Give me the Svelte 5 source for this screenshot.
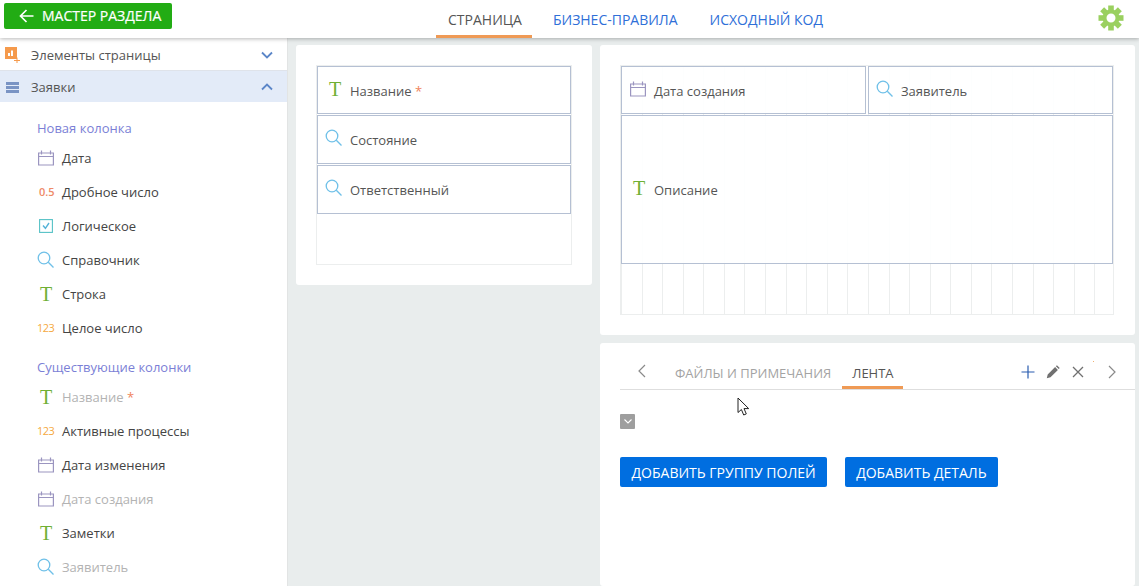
<script>
  const newColumns = [
    { icon: "date", label: "Дата" },
    { icon: "float", label: "Дробное число" },
    { icon: "bool", label: "Логическое" },
    { icon: "lookup", label: "Справочник" },
    { icon: "text", label: "Строка" },
    { icon: "int", label: "Целое число" },
  ];
  const existingColumns = [
    { icon: "text", label: "Название", required: true, used: true },
    { icon: "int", label: "Активные процессы" },
    { icon: "date", label: "Дата изменения" },
    { icon: "date", label: "Дата создания", used: true },
    { icon: "text", label: "Заметки" },
    { icon: "lookup", label: "Заявитель", used: true },
  ];
  const gearTeeth = [0, 45, 90, 135, 180, 225, 270, 315];
</script>

{#snippet fieldIcon(icon)}
  {#if icon === "date"}
    <svg class="ico" width="18" height="16" viewBox="0 0 18 16" fill="none" stroke="#9b95c0" stroke-width="1.2">
      <path d="M1.600 3h14.800v12H1.600zM1.600 6.500h14.800M4.500 0.500v4M13.500 0.500v4" />
    </svg>
  {:else if icon === "lookup"}
    <svg class="ico" width="18" height="18" viewBox="0 0 18 18" fill="none" stroke="#6fc0e8" stroke-width="1.300">
      <circle cx="7" cy="7" r="5.800" />
      <path d="M11.300 11.300l5.200 5.200" />
    </svg>
  {:else if icon === "text"}
    <span class="ico t-icon">T</span>
  {:else if icon === "float"}
    <span class="ico num float">0.5</span>
  {:else if icon === "int"}
    <span class="ico num int">123</span>
  {:else if icon === "bool"}
    <svg class="ico" width="18" height="16" viewBox="0 0 18 16" fill="none">
      <rect x="2.600" y="1.600" width="12.800" height="12.800" stroke="#56c2c6" stroke-width="1.100" />
      <path d="M6 7.500l2.400 2.800L12 5" stroke="#56b4d8" stroke-width="1.400" />
    </svg>
  {/if}
{/snippet}

{#snippet field(icon, label, required, cls)}
  <div class="field {cls}">
    <span class="field-icon">{@render fieldIcon(icon)}</span>
    <span class="field-label">{label}{#if required}<span class="req">&nbsp;*</span>{/if}</span>
  </div>
{/snippet}

<div class="page">
  <header>
    <div class="head-left">
      <button class="back">
        <svg width="15" height="14" viewBox="0 0 15 14" fill="none" stroke="#fff" stroke-width="1.700">
          <path d="M14.500 7H1.500M7.500 1L1.500 7l6 6" />
        </svg>
        МАСТЕР РАЗДЕЛА
      </button>
    </div>
    <nav>
      <span class="tab active">СТРАНИЦА</span>
      <span class="tab">БИЗНЕС-ПРАВИЛА</span>
      <span class="tab">ИСХОДНЫЙ КОД</span>
    </nav>
    <div class="head-right">
      <svg width="26" height="26" viewBox="0 0 26 26" fill="#9ad05f">
        {#each gearTeeth as angle}
          <rect x="10.200" y="0.500" width="5.600" height="6" transform="rotate({angle} 13 13)" />
        {/each}
        <path fill-rule="evenodd" d="M13 4.500a8.500 8.500 0 1 0 0 17 8.500 8.500 0 0 0 0-17zM13 8.500a4.500 4.500 0 1 1 0 9 4.500 4.500 0 0 1 0-9z" />
      </svg>
    </div>
  </header>

  <div class="body">
    <aside>
      <div class="section">
        <svg class="sec-icon" width="20" height="20" viewBox="0 0 20 20">
          <rect x="5" y="4" width="12" height="12" fill="#f59a4c" />
          <path d="M8 10h2v3H8zM11 7.500h2V13h-2z" fill="#fff" />
          <path d="M14 17.500h6M17 14.500v6" stroke="#f59a4c" stroke-width="1" />
        </svg>
        <span>Элементы страницы</span>
        <svg class="chev" width="12" height="8" viewBox="0 0 12 8" fill="none" stroke="#5b86c8" stroke-width="1.800"><path d="M1 1.500l5 5 5-5" /></svg>
      </div>
      <div class="section open">
        <svg class="sec-icon" width="20" height="20" viewBox="0 0 20 20" fill="#7a94c4">
          <path d="M6 4h13v3H6zM6 8h13v3H6zM6 12h13v3H6z" />
        </svg>
        <span>Заявки</span>
        <svg class="chev" width="12" height="8" viewBox="0 0 12 8" fill="none" stroke="#5b86c8" stroke-width="1.800"><path d="M1 6.500l5-5 5 5" /></svg>
      </div>

      <div class="group-title first">Новая колонка</div>
      {#each newColumns as col}
        <div class="col">
          <span class="col-icon">{@render fieldIcon(col.icon)}</span>
          <span>{col.label}</span>
        </div>
      {/each}

      <div class="group-title second">Существующие колонки</div>
      {#each existingColumns as col}
        <div class="col" class:used={col.used}>
          <span class="col-icon">{@render fieldIcon(col.icon)}</span>
          <span>{col.label}{#if col.required}<span class="req">&nbsp;*</span>{/if}</span>
        </div>
      {/each}
    </aside>

    <main>
      <div class="side-col">
        <section class="card left-card">
          <div class="grid left-grid">
            {@render field("text", "Название", true, "top")}
            {@render field("lookup", "Состояние", false, "")}
            {@render field("lookup", "Ответственный", false, "")}
          </div>
        </section>
      </div>

      <div class="main-col">
        <section class="card right-card">
          <div class="grid right-grid">
            {@render field("date", "Дата создания", false, "half top")}
            {@render field("lookup", "Заявитель", false, "half top")}
            {@render field("text", "Описание", false, "wide")}
          </div>
        </section>

        <section class="card tabs-card">
          <div class="tabs">
            <svg class="arrow" width="10" height="14" viewBox="0 0 10 14" fill="none" stroke="#8a8a8a" stroke-width="1.200"><path d="M8 1L2 7l6 6" /></svg>
            <span class="dtab">ФАЙЛЫ И ПРИМЕЧАНИЯ</span>
            <span class="dtab current">ЛЕНТА</span>
            <div class="tools">
              <svg class="plus" width="14" height="14" viewBox="0 0 14 14" stroke="#2a5db0" stroke-width="1.200"><path d="M7 0.500v13M0.500 7h13" /></svg>
              <svg width="14" height="14" viewBox="0 0 14 14" fill="#707070"><path d="M0.800 13.200l.9-3.700 7.400-7.400 2.800 2.800-7.400 7.400zM9.900 1.300l1-1 2.800 2.800-1 1z" /></svg>
              <svg width="12" height="12" viewBox="0 0 12 12" stroke="#707070" stroke-width="1.300"><path d="M1 1l10 10M11 1L1 11" /></svg>
              <svg class="next" width="10" height="14" viewBox="0 0 10 14" fill="none" stroke="#8a8a8a" stroke-width="1.200"><path d="M2 1l6 6-6 6" /></svg>
            </div>
            <span class="speck"></span>
          </div>
          <div class="toggle">
            <svg width="8" height="5" viewBox="0 0 8 5" fill="none" stroke="#fff" stroke-width="1.100"><path d="M0.500 0.500L4 4l3.500-3.500" /></svg>
          </div>
          <div class="actions">
            <button class="add">ДОБАВИТЬ ГРУППУ ПОЛЕЙ</button>
            <button class="add">ДОБАВИТЬ ДЕТАЛЬ</button>
          </div>
        </section>
      </div>
    </main>
  </div>

  <svg class="cursor" width="14" height="20" viewBox="0 0 14 20" fill="#fff" stroke="#222" stroke-width="1">
    <path d="M1 1v14.500l3.400-3 2.300 5.500 2.600-1.100-2.300-5.300h4.700z" />
  </svg>
</div>

<style>
  :global(body) {
    overflow: hidden;
  }
  .page {
    position: relative;
    width: 1139px;
    height: 586px;
    overflow: hidden;
    background: #e9eded;
    font-family: "Open Sans", "Liberation Sans", sans-serif;
    font-size: 13px;
    color: #444;
  }
  header {
    position: relative;
    z-index: 2;
    height: 38px;
    display: flex;
    align-items: center;
    background: #fff;
    box-shadow: 0 1px 4px rgba(0, 0, 0, 0.28);
  }
  .head-left {
    width: 436px;
    padding-left: 4px;
    box-sizing: border-box;
  }
  .back {
    width: 168px;
    height: 26px;
    margin-top: -7px;
    display: flex;
    align-items: center;
    gap: 8px;
    padding: 0 0 0 15px;
    border: 0;
    border-radius: 2px;
    background: #22ac14;
    color: #fff;
    font: 14px "Open Sans", sans-serif;
    -webkit-text-stroke: 0.2px #fff;
  }
  nav {
    display: flex;
    height: 38px;
    gap: 10px;
  }
  .tab {
    padding: 12px 11px 0;
    color: #2f6fd8;
    font-size: 14px;
    line-height: 15px;
    box-sizing: border-box;
  }
  .tab.active {
    padding: 12px 10px 0 12px;
    color: #555;
    border-bottom: 3px solid #ef9a55;
  }
  .head-right {
    margin-left: auto;
    padding-right: 15px;
    height: 26px;
    margin-top: -2px;
  }
  .body {
    display: flex;
    height: 548px;
  }
  aside {
    width: 288px;
    flex: none;
    box-sizing: border-box;
    background: #fff;
    border-right: 1px solid #e2e4e4;
    overflow: hidden;
  }
  .section {
    height: 33px;
    display: flex;
    align-items: center;
    padding: 1px 14px 0 31px;
    position: relative;
    border-bottom: 1px solid #dfe3ea;
    box-sizing: border-box;
    font-size: 13px;
    color: #555;
  }
  .section.open {
    height: 31px;
    background: #e3ebf8;
    border-bottom: 0;
  }
  .sec-icon {
    position: absolute;
    left: 0;
    top: 5px;
  }
  .open .sec-icon {
    top: 7px;
  }
  .chev {
    margin-left: auto;
  }
  .group-title {
    padding-left: 37px;
    height: 18px;
    line-height: 18px;
    color: #7b7fd6;
  }
  .group-title.first {
    margin-top: 17px;
    margin-bottom: 4px;
  }
  .group-title.second {
    margin-top: 13px;
    margin-bottom: 4px;
  }
  .col {
    height: 34px;
    display: flex;
    align-items: center;
    color: #444;
    font-size: 13px;
  }
  .col.used {
    color: #b3b3b3;
  }
  .col-icon {
    width: 62px;
    flex: none;
    display: flex;
    justify-content: flex-start;
    padding-left: 37px;
    box-sizing: border-box;
  }
  .ico {
    display: block;
  }
  .t-icon {
    width: 18px;
    text-align: center;
    font: 20px/18px "Liberation Serif", serif;
    color: #6fb034;
  }
  .num {
    width: 18px;
    font-size: 11px;
    font-weight: 600;
    line-height: 16px;
    white-space: nowrap;
  }
  .float {
    color: #ee8a68;
    padding-left: 2px;
  }
  .int {
    color: #f5a940;
    font-weight: 400;
    letter-spacing: -0.6px;
  }
  .req {
    color: #f0845c;
  }
  main {
    flex: 1;
    display: flex;
    gap: 8px;
    padding: 7px 4px 0 8px;
    min-width: 0;
  }
  .side-col {
    width: 296px;
    flex: none;
  }
  .main-col {
    flex: 1;
    display: flex;
    flex-direction: column;
    gap: 8px;
    min-width: 0;
  }
  .card {
    background: #fff;
    border-radius: 3px;
    box-sizing: border-box;
    padding: 20px;
  }
  .right-card {
    padding-right: 21px;
  }
  .grid {
    display: grid;
    box-sizing: border-box;
    border: 1px solid #eceeee;
  }
  .left-grid {
    height: 200px;
    grid-template-columns: 1fr;
    grid-template-rows: 49px 50px 50px 49px;
  }
  .right-grid {
    height: 250px;
    grid-template-columns: repeat(24, 1fr);
    grid-template-rows: 49px 50px 50px 50px 49px;
    background-image: repeating-linear-gradient(
      to right,
      #eceeee 0,
      #eceeee 1px,
      transparent 1px,
      transparent 20.580px
    );
  }
  .field {
    display: flex;
    align-items: center;
    box-sizing: border-box;
    margin-bottom: 1px;
    padding-top: 1px;
    background: rgba(255, 255, 255, 0.9);
    border: 1px solid #b5c0d3;
    color: #555;
    font-size: 13px;
    line-height: 18px;
  }
  .field.top {
    padding-top: 2px;
  }
  .field-icon {
    width: 32px;
    flex: none;
    display: flex;
    justify-content: center;
    box-sizing: border-box;
    margin-top: -4px;
  }
  .field-icon .t-icon {
    margin-left: 2px;
  }
  .half {
    grid-column: span 12;
  }
  .half:first-child {
    margin-right: 1px;
  }
  .half + .half {
    margin-left: 1px;
  }
  .wide {
    grid-column: 1 / -1;
    grid-row: span 3;
  }
  .tabs-card {
    flex: 1;
    padding: 20px;
  }
  .tabs {
    height: 26px;
    display: flex;
    margin-right: -20px;
    border-bottom: 1px solid #dedede;
    position: relative;
  }
  .arrow {
    margin: 1px 0 0 17px;
  }
  .dtab {
    margin-left: 28px;
    color: #a3a3a3;
    font-size: 13px;
    line-height: 20px;
  }
  .dtab.current {
    margin-left: 11px;
    padding: 0 9px 0 10px;
    color: #555;
    border-bottom: 3px solid #ef9a55;
    box-sizing: border-box;
    height: 26px;
  }
  .tools {
    margin-left: auto;
    margin-right: 18px;
    display: flex;
    align-items: center;
    gap: 12px;
    height: 18px;
  }
  .tools .plus {
    margin-right: -1px;
  }
  .tools .next {
    margin-left: 11px;
  }
  .speck {
    position: absolute;
    left: 473px;
    top: -2px;
    width: 1px;
    height: 1px;
    background: #f0b070;
  }
  .toggle {
    width: 15px;
    height: 15px;
    margin-top: 24px;
    background: #9e9e9e;
    border-radius: 1px;
    display: flex;
    align-items: center;
    justify-content: center;
  }
  .actions {
    display: flex;
    gap: 18px;
    margin-top: 28px;
  }
  .add {
    height: 30px;
    padding: 0 11px;
    border: 0;
    border-radius: 2px;
    background: #006ee0;
    color: #fff;
    font: 14px "Open Sans", sans-serif;
  }
  .add:first-child {
    padding: 0 11.5px;
  }
  .cursor {
    position: absolute;
    left: 737px;
    top: 397px;
    z-index: 3;
  }
</style>
